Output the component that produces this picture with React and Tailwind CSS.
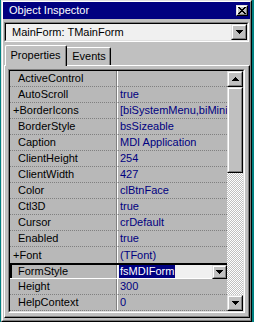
import React from "react";

const rows = [
  ["ActiveControl", ""],
  ["AutoScroll", "true"],
  ["+BorderIcons", "[biSystemMenu,biMinimize,biMaximize]"],
  ["BorderStyle", "bsSizeable"],
  ["Caption", "MDI Application"],
  ["ClientHeight", "254"],
  ["ClientWidth", "427"],
  ["Color", "clBtnFace"],
  ["Ctl3D", "true"],
  ["Cursor", "crDefault"],
  ["Enabled", "true"],
  ["+Font", "(TFont)"],
  ["FormStyle", "fsMDIForm", true],
  ["Height", "300"],
  ["HelpContext", "0"],
];

function Raised({ className = "", children }) {
  return (
    <div className={"border border-[#dfdfdf] border-r-black border-b-black " + className}>
      <div className="w-full h-full border border-white border-r-[#808080] border-b-[#808080] bg-[#c0c0c0] flex items-center justify-center">
        {children}
      </div>
    </div>
  );
}

function ArrowDown() {
  return (
    <svg width="7" height="4" viewBox="0 0 7 4" shapeRendering="crispEdges">
      <path d="M0 0h7v1H0z M1 1h5v1H1z M2 2h3v1H2z M3 3h1v1H3z" fill="#000" />
    </svg>
  );
}

function ArrowUp() {
  return (
    <svg width="7" height="4" viewBox="0 0 7 4" shapeRendering="crispEdges">
      <path d="M3 0h1v1H3z M2 1h3v1H2z M1 2h5v1H1z M0 3h7v1H0z" fill="#000" />
    </svg>
  );
}

function CloseGlyph() {
  return (
    <svg width="8" height="7" viewBox="0 0 8 7" shapeRendering="crispEdges">
      <path
        d="M0 0h2v1H0z M6 0h2v1H6z M1 1h2v1H1z M5 1h2v1H5z M2 2h4v1H2z M3 3h2v1H3z M2 4h4v1H2z M1 5h2v1H1z M5 5h2v1H5z M0 6h2v1H0z M6 6h2v1H6z"
        fill="#000"
      />
    </svg>
  );
}

function Row({ name, value, selected, beforeSelected }) {
  const plus = name.startsWith("+");
  if (selected) {
    return (
      <div className="flex h-[16px] border-t-2 border-black border-b border-b-white">
        <div className="w-[107px] shrink-0 border-l-2 border-black border-r border-r-[#808080] pl-[6px] flex items-center text-black">
          {name}
        </div>
        <div className="flex-1 border-l border-white flex min-w-0">
          <div className="flex-1 bg-[#f0f0f0] flex items-center pl-px">
            <span className="bg-[#000080] text-white leading-[13px] px-px">{value}</span>
          </div>
          <Raised className="w-[15px] h-[14px]">
            <ArrowDown />
          </Raised>
        </div>
      </div>
    );
  }
  return (
    <div
      className={
        "flex h-[16px] " +
        (beforeSelected ? "" : "border-b border-dotted border-[#808080]")
      }
    >
      <div
        className={
          "w-[107px] shrink-0 border-r border-r-[#808080] flex items-center text-black " +
          (plus ? "pl-[3px]" : "pl-[8px]")
        }
      >
        {name}
      </div>
      <div className="flex-1 min-w-0 border-l border-white pl-[2px] flex items-center text-[#000080] whitespace-nowrap overflow-hidden">
        {value}
      </div>
    </div>
  );
}

export default function App() {
  return (
    <div className="w-[254px] h-[322px] bg-[#008080] pl-px font-['Liberation_Sans',Arial,sans-serif] text-[11px] leading-none select-none">
      <div className="w-[251px] h-[322px] border border-[#dfdfdf] border-r-black border-b-black">
        <div className="w-full h-full border border-white border-r-[#808080] border-b-[#808080] bg-[#c0c0c0] flex flex-col">
          {/* title bar */}
          <div className="h-[17px] bg-[#000080] flex items-center justify-between pl-[6px] pr-[2px]">
            <span className="text-white">Object Inspector</span>
            <Raised className="w-[12px] h-[11px]">
              <CloseGlyph />
            </Raised>
          </div>

          {/* combo */}
          <div className="mt-[3px] mx-px h-[20px] border border-[#808080] border-r-white border-b-white">
            <div className="w-full h-full border border-black border-r-[#dfdfdf] border-b-[#dfdfdf] bg-[#f0f0f0] flex items-center">
              <span className="flex-1 pl-[6px] text-black">MainForm: TMainForm</span>
              <Raised className="w-[16px] h-[16px]">
                <ArrowDown />
              </Raised>
            </div>
          </div>

          {/* tabs */}
          <div className="mt-[3px] ml-px h-[20px] flex items-end pl-px">
            <div className="relative z-10 top-px w-[62px] h-[21px] bg-[#c0c0c0] border-l border-t border-white rounded-tl-[2px] rounded-tr-[2px] border-r border-r-black flex">
              <div className="flex-1 border-r border-[#808080] flex items-center justify-center pb-[2px] text-black">
                Properties
              </div>
            </div>
            <div className="w-[44px] h-[18px] border-t border-white border-r border-r-black rounded-tr-[2px] flex">
              <div className="flex-1 border-r border-[#808080] flex items-center justify-center pl-[2px] text-black">
                Events
              </div>
            </div>
          </div>

          {/* page */}
          <div className="ml-px w-[246px] h-[253px] border-l border-t border-white border-r border-b border-r-black border-b-black">
            <div className="w-full h-full border-r border-b border-[#808080] pl-[3px] pt-[3px]">
              {/* grid */}
              <div className="w-[237px] h-[244px] border border-[#808080] border-r-white border-b-white">
                <div className="w-full h-full border border-black border-r-[#dfdfdf] border-b-[#dfdfdf] bg-[#b8b8b8] flex">
                  <div className="flex-1 min-w-0 flex flex-col">
                    {rows.map(([n, v, sel], i) => (
                      <Row
                        key={n}
                        name={n}
                        value={v}
                        selected={sel}
                        beforeSelected={rows[i + 1] && rows[i + 1][2]}
                      />
                    ))}
                  </div>
                  {/* scrollbar */}
                  <div className="w-[16px] shrink-0 flex flex-col">
                    <Raised className="w-[16px] h-[16px]">
                      <ArrowUp />
                    </Raised>
                    <Raised className="w-[16px] h-[86px]" />
                    <div className="flex-1 bg-[image:repeating-conic-gradient(#c0c0c0_0_25%,#ffffff_0_50%)] bg-[length:2px_2px]" />
                    <Raised className="w-[16px] h-[16px]">
                      <ArrowDown />
                    </Raised>
                  </div>
                </div>
              </div>
            </div>
          </div>
        </div>
      </div>
    </div>
  );
}
